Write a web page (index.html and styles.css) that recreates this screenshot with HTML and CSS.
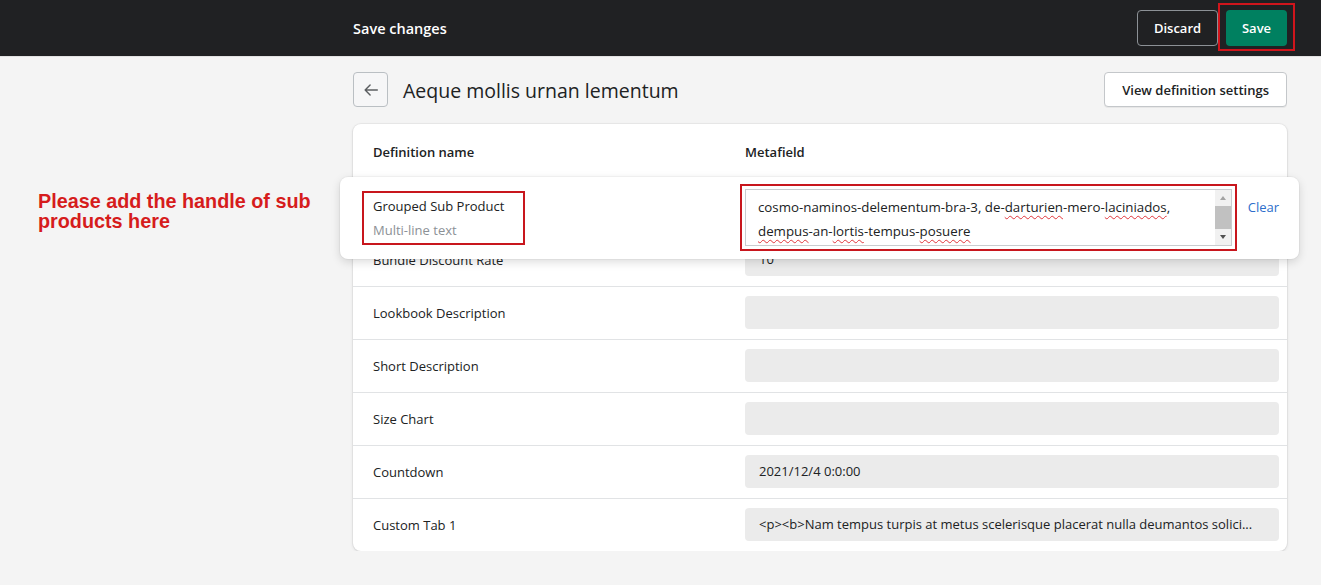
FILE: index.html
```html
<!DOCTYPE html>
<html lang="en">
<head>
<meta charset="utf-8">
<title>Save changes</title>
<link rel="stylesheet" href="styles.css">
</head>
<body>
<header class="topbar">
  <div class="topbar-inner">
    <span class="tb-title">Save changes</span>
    <div class="tb-actions">
      <button class="btn-discard">Discard</button>
      <button class="btn-save">Save</button>
    </div>
  </div>
</header>
<main class="page">
  <p class="note">Please add the handle of sub<br>products here</p>
  <div class="content">
    <div class="header">
      <button class="back" aria-label="Back">
        <svg width="18" height="18" viewBox="0 0 20 20" fill="none" stroke="#5c5f62" stroke-width="1.6" stroke-linecap="round" stroke-linejoin="round"><path d="M17 10H3.5M9 4.5L3.5 10 9 15.5"/></svg>
      </button>
      <h1 class="title">Aeque mollis urnan lementum</h1>
      <button class="btn-settings">View definition settings</button>
    </div>
    <div class="card">
      <div class="row head">
        <div>Definition name</div>
        <div>Metafield</div>
      </div>
      <div class="row active">
        <div class="label-box">
          <div>Grouped Sub Product</div>
          <div class="sub">Multi-line text</div>
        </div>
        <div class="field-wrap">
          <div class="textarea">
            <div class="ta-text">cosmo-naminos-delementum-bra-3, de-<span class="sp">darturien</span>-mero-<span class="sp">laciniados</span>,<br><span class="sp">dempus</span>-an-<span class="sp">lortis</span>-tempus-<span class="sp">posuere</span></div>
            <div class="scrollbar">
              <span class="arr up"></span>
              <span class="thumb"></span>
              <span class="arr down"></span>
            </div>
          </div>
          <span class="clear">Clear</span>
        </div>
      </div>
      <div class="row">
        <div>Bundle Discount Rate</div>
        <div class="input">10</div>
      </div>
      <div class="row">
        <div>Lookbook Description</div>
        <div class="input"></div>
      </div>
      <div class="row">
        <div>Short Description</div>
        <div class="input"></div>
      </div>
      <div class="row">
        <div>Size Chart</div>
        <div class="input"></div>
      </div>
      <div class="row">
        <div>Countdown</div>
        <div class="input">2021/12/4 0:0:00</div>
      </div>
      <div class="row">
        <div>Custom Tab 1</div>
        <div class="input">&lt;p&gt;&lt;b&gt;Nam tempus turpis at metus scelerisque placerat nulla deumantos solici...</div>
      </div>
    </div>
  </div>
</main>
</body>
</html>
```

FILE: styles.css
```css
* { box-sizing: border-box; }

body {
  margin: 0;
  background: #f4f4f4;
  font-family: "Open Sans", "Noto Sans", sans-serif;
  font-size: 13px;
  color: #202223;
}

.topbar {
  height: 56px;
  background: #202123;
  box-shadow: 0 1px 0 #e2e2e2;
}

.topbar-inner {
  height: 100%;
  margin-left: 353px;
  width: 934px;
  display: flex;
  align-items: center;
  justify-content: space-between;
}

.tb-title {
  color: #fff;
  font-weight: 600;
  font-size: 14.5px;
}

.tb-actions {
  display: flex;
  gap: 8px;
}

.btn-discard,
.btn-save,
.btn-settings {
  font-family: inherit;
  font-weight: 600;
  font-size: 13px;
  border-radius: 4px;
  cursor: pointer;
}

.btn-discard {
  height: 36px;
  width: 81px;
  background: transparent;
  border: 1px solid #8c9196;
  color: #fff;
}

.btn-save {
  position: relative;
  height: 36px;
  width: 61px;
  background: #008060;
  border: none;
  color: #fff;
}

.btn-save::after {
  content: "";
  position: absolute;
  left: -8px;
  right: -8px;
  top: -7px;
  bottom: -5px;
  border: 2px solid #d0151c;
}

.page {
  position: relative;
  padding: 16px 0 0 353px;
}

.note {
  position: absolute;
  left: 38px;
  top: 135px;
  margin: 0;
  font-family: "Liberation Sans", Arial, sans-serif;
  font-weight: 700;
  font-size: 19.8px;
  line-height: 20px;
  color: #d61c1c;
}

.content {
  width: 934px;
}

.header {
  display: flex;
  align-items: center;
  height: 35px;
  margin-bottom: 17px;
}

.back {
  width: 35px;
  height: 35px;
  border: 1px solid #babfc3;
  border-radius: 4px;
  background: #f6f6f7;
  display: flex;
  align-items: center;
  justify-content: center;
  padding: 0;
}

.title {
  margin: 2px 0 0 15px;
  font-size: 19.5px;
  font-weight: 500;
  color: #202223;
  flex: 1;
}

.btn-settings {
  height: 35px;
  padding: 0 17px;
  background: #fff;
  border: 1px solid #c4c7ca;
  color: #202223;
  box-shadow: 0 1px 0 rgba(0, 0, 0, 0.05);
}

.card {
  background: #fff;
  border-radius: 8px;
  box-shadow: 0 0 0 1px rgba(63, 63, 68, 0.05), 0 1px 3px rgba(63, 63, 68, 0.15);
}

.row {
  display: grid;
  grid-template-columns: 372px 534px;
  align-items: center;
  padding: 9px 8px 10px 20px;
  border-top: 1px solid #e1e3e5;
}

.row.head {
  height: 56px;
  padding-top: 0;
  padding-bottom: 0;
  border-top: none;
  font-weight: 600;
}

.row.active {
  position: relative;
  z-index: 1;
  margin: -3px -12px -26px -13px;
  padding: 12px 20px 13px 33px;
  border-top: none;
  background: #fff;
  border-radius: 8px;
  box-shadow: 0 0 0 1px rgba(0, 0, 0, 0.03), 0 3px 10px rgba(0, 0, 0, 0.14);
}

.label-box {
  width: 163px;
  margin-left: -11px;
  padding: 1px 0 1px 9px;
  border: 2px solid #c8161d;
  line-height: 24px;
}

.sub {
  color: #8c9196;
}

.field-wrap {
  display: flex;
  align-items: flex-start;
  gap: 16px;
}

.textarea {
  flex: 1;
  height: 57px;
  display: flex;
  border: 1px solid #c9cccf;
  background: #fff;
  outline: 2px solid #c8161d;
  outline-offset: 3px;
}

.ta-text {
  flex: 1;
  padding: 5px 0 0 12px;
  font-size: 13.3px;
  line-height: 24px;
  white-space: nowrap;
  overflow: hidden;
}

.sp {
  text-decoration: underline wavy #e0353b;
  text-decoration-thickness: 1px;
  text-underline-offset: 3px;
}

.scrollbar {
  width: 16px;
  background: #f1f1f1;
  display: flex;
  flex-direction: column;
  align-items: center;
}

.arr {
  height: 16px;
  width: 100%;
  display: flex;
  align-items: center;
  justify-content: center;
}

.arr::before {
  content: "";
  border-left: 3.5px solid transparent;
  border-right: 3.5px solid transparent;
}

.arr.up::before {
  border-bottom: 4px solid #a3a3a3;
}

.arr.down::before {
  border-top: 4px solid #505050;
}

.thumb {
  flex: 1;
  width: 100%;
  background: #c1c1c1;
}

.clear {
  color: #2c6ecb;
  line-height: 20px;
  margin-top: 8px;
}

.input {
  height: 33px;
  line-height: 33px;
  padding: 0 14px;
  background: #ebebeb;
  border-radius: 4px;
  white-space: nowrap;
  overflow: hidden;
}
```
